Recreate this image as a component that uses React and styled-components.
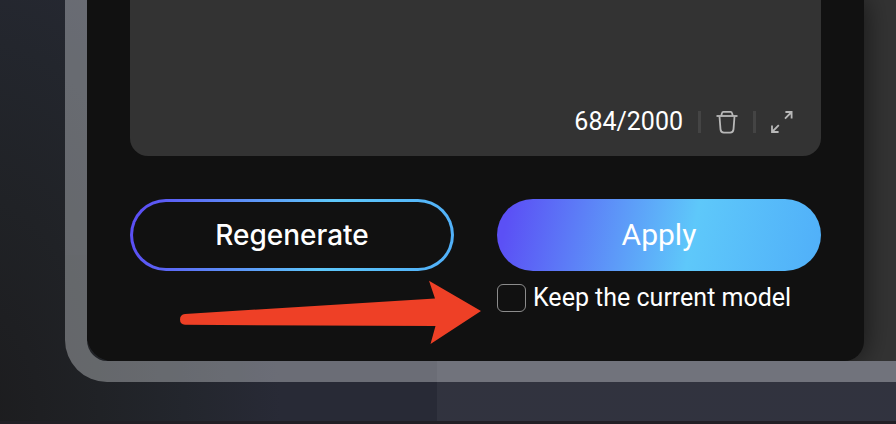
import React, { useState } from "react";
import styled, { createGlobalStyle } from "styled-components";

const GlobalStyle = createGlobalStyle`
  *, *::before, *::after { box-sizing: border-box; }
  body {
    margin: 0;
    background: #1d1d1f;
    font-family: Roboto, "Liberation Sans", sans-serif;
    color: #fff;
  }
`;

const Page = styled.main`
  position: relative;
  min-height: 100vh;
  padding: 0 0 39px 65px;
  border-bottom: 3px solid #211f25;
  background:
    linear-gradient(90deg, transparent 437px, rgba(255, 255, 255, 0.045) 437px),
    radial-gradient(ellipse 300px 560px at -20px 100%, #1c1c1e 0, #202226 40%, #23262d 68%, #282a36 100%);
`;

const Frame = styled.div`
  border: solid rgba(248, 251, 255, 0.32);
  border-width: 0 0 21px 22px;
  border-bottom-left-radius: 42px;
`;

const Workspace = styled.div`
  display: grid;
  grid-template-columns: minmax(0, 1fr) 32px;
  overflow: hidden;
  border-bottom-left-radius: 26px;
  background: linear-gradient(90deg, #111 50%, #333 50%);
`;

const Panel = styled.form`
  display: flex;
  flex-direction: column;
  gap: 43px;
  padding: 0 43px 49px;
  background: #111;
  border-bottom-right-radius: 20px;
  box-shadow: 0 0 28px rgba(0, 0, 0, 0.6);
`;

const PromptBox = styled.section`
  display: flex;
  flex-direction: column;
  padding: 0 28px 17px;
  background: #333;
  border-radius: 0 0 18px 18px;
`;

const PromptInput = styled.textarea`
  height: 105px;
  padding: 0;
  border: 0;
  outline: 0;
  resize: none;
  background: transparent;
  color: #fff;
  font: 25px/34px Roboto, sans-serif;
`;

const PromptFooter = styled.div`
  display: flex;
  align-items: center;
  justify-content: flex-end;
  height: 34px;
`;

const Counter = styled.output`
  font-size: 25px;
  line-height: 34px;
`;

const Divider = styled.span`
  width: 3px;
  height: 22px;
  margin: 0 15px;
  background: #444;
`;

const IconButton = styled.button`
  display: flex;
  padding: 0;
  border: 0;
  background: none;
  color: #b8b8b8;
  cursor: pointer;
`;

const Actions = styled.div`
  display: grid;
  grid-template-columns: 1fr 1fr;
  gap: 13px 43px;
`;

const sweep = "linear-gradient(102deg, #5b50f5 4%, #5ec8fa 60%, #50aff9 100%)";

const ActionButton = styled.button`
  height: 72px;
  border: 3px solid transparent;
  border-radius: 36px;
  background: ${(p) =>
    p.$outlined
      ? `linear-gradient(#111, #111) padding-box, ${sweep} border-box`
      : `${sweep} border-box`};
  color: #fff;
  font: ${(p) => (p.$outlined ? "500 28px/36px Inter" : "30px/36px Roboto")}, sans-serif;
  cursor: pointer;
`;

const Option = styled.label`
  grid-column: 2;
  display: flex;
  align-items: center;
  gap: 7px;
  font-size: 25px;
  line-height: 28px;
  white-space: nowrap;
`;

const Checkbox = styled.input`
  appearance: none;
  flex: none;
  width: 29px;
  height: 28px;
  margin: 0;
  border: 1px solid #8c8c8c;
  border-radius: 6px;
  &:checked { background: #5b50f5; }
`;

const Pointer = styled.svg`
  position: absolute;
  left: 180px;
  top: 280px;
  pointer-events: none;
`;

function TrashIcon() {
  return (
    <svg width="22" height="24" viewBox="0 0 22 24" fill="none" stroke="currentColor" strokeWidth="1.8" aria-hidden="true">
      <path d="M0.5 6H21.5" />
      <path d="M5.2 6L6 2.9Q6.2 1.8 7.4 1.8H14.6Q15.8 1.8 16 2.9L16.8 6" />
      <path d="M3.5 6.5L4.5 19.4Q4.8 22.6 7.9 22.6H14.1Q17.2 22.6 17.5 19.4L18.5 6.5" />
    </svg>
  );
}

function ExpandIcon() {
  return (
    <svg width="22" height="22" viewBox="0 0 22 22" fill="none" stroke="currentColor" strokeWidth="1.8" aria-hidden="true">
      <path d="M14.4 1H20.6V7.6M20.6 1L14 7.6" />
      <path d="M1 14.4V21H7.6M1 21L7.8 14.2" />
    </svg>
  );
}

export default function App() {
  const [keep, setKeep] = useState(false);
  return (
    <>
      <GlobalStyle />
      <Page>
        <Frame>
          <Workspace>
            <Panel onSubmit={(e) => e.preventDefault()}>
              <PromptBox>
                <PromptInput id="prompt" aria-label="Prompt" />
                <PromptFooter>
                  <Counter htmlFor="prompt">684/2000</Counter>
                  <Divider />
                  <IconButton type="button" aria-label="Clear">
                    <TrashIcon />
                  </IconButton>
                  <Divider />
                  <IconButton type="button" aria-label="Expand">
                    <ExpandIcon />
                  </IconButton>
                </PromptFooter>
              </PromptBox>
              <Actions>
                <ActionButton type="button" $outlined>Regenerate</ActionButton>
                <ActionButton type="submit">Apply</ActionButton>
                <Option>
                  <Checkbox type="checkbox" checked={keep} onChange={(e) => setKeep(e.target.checked)} />
                  Keep the current model
                </Option>
              </Actions>
            </Panel>
          </Workspace>
        </Frame>
        <Pointer width="302" height="66" viewBox="0 0 302 66" aria-hidden="true">
          <path
            fill="#ee4026"
            d="M5 34L255 18.4L249 0.8L301 31L250.5 64L255.5 46L5 44.8Q0 44.5 0 39.5Q0 34.5 5 34Z"
          />
        </Pointer>
      </Page>
    </>
  );
}
